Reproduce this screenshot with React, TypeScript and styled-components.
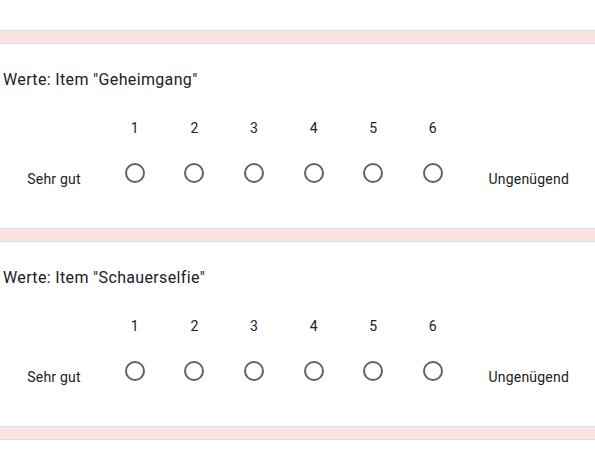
import React from "react";
import styled, { createGlobalStyle } from "styled-components";

const Global = createGlobalStyle`
  html, body { margin: 0; padding: 0; background: #fae3e2; }
  body { font-family: Roboto, "Liberation Sans", Arial, sans-serif; color: #202124; }
`;

const Page = styled.div`
  display: flex;
  flex-direction: column;
  gap: 12px;
  background: #fae3e2;
  height: 457px;
  overflow: hidden;
`;

const Card = styled.div<{ $h?: number }>`
  background: #ffffff;
  border-top: 1px solid #dadce0;
  border-bottom: 1px solid #dadce0;
  ${(p) => (p.$h !== undefined ? `height: ${p.$h}px; flex: none;` : "")}
`;

const TopCard = styled.div`
  background: #ffffff;
  border-bottom: 1px solid #dadce0;
  height: 30px;
  flex: none;
`;

const Question = styled.div`
  padding: 24px 0 30px 3px;
  height: 184px;
  box-sizing: border-box;
`;

const Title = styled.div`
  font-size: 16px;
  line-height: 24px;
  letter-spacing: 0.35px;
  color: #202124;
`;

const Scale = styled.div`
  margin-top: 24px;
  margin-left: -3px;
  display: grid;
  grid-template-columns: 105px repeat(6, 59.6px) 1fr;
  grid-template-rows: 24px 48px;
  row-gap: 9px;
`;

const Num = styled.div`
  font-size: 14px;
  line-height: 24px;
  text-align: center;
  color: #202124;
`;

const Cell = styled.div`
  display: flex;
  align-items: center;
  justify-content: center;
`;

const Label = styled.div<{ $shift?: number }>`
  display: flex;
  align-items: center;
  justify-content: center;
  padding-top: 12px;
  padding-left: ${(p) => p.$shift ?? 0}px;
  font-size: 14px;
  letter-spacing: 0.2px;
  color: #202124;
`;

const Radio = styled.div`
  width: 20px;
  height: 20px;
  box-sizing: border-box;
  border: 2px solid #5f6368;
  border-radius: 50%;
`;

const nums = [1, 2, 3, 4, 5, 6];

function ScaleQuestion({ title }: { title: string }) {
  return (
    <Question>
      <Title>{title}</Title>
      <Scale>
        <div />
        {nums.map((n) => (
          <Num key={n}>{n}</Num>
        ))}
        <div />
        <Label $shift={3}>Sehr gut</Label>
        {nums.map((n) => (
          <Cell key={n}>
            <Radio role="radio" aria-checked="false" />
          </Cell>
        ))}
        <Label>Ungenügend</Label>
      </Scale>
    </Question>
  );
}

export default function App() {
  return (
    <>
      <Global />
      <Page>
        <TopCard />
        <Card>
          <ScaleQuestion title={'Werte: Item "Geheimgang"'} />
        </Card>
        <Card>
          <ScaleQuestion title={'Werte: Item "Schauerselfie"'} />
        </Card>
        <Card $h={40} />
      </Page>
    </>
  );
}
